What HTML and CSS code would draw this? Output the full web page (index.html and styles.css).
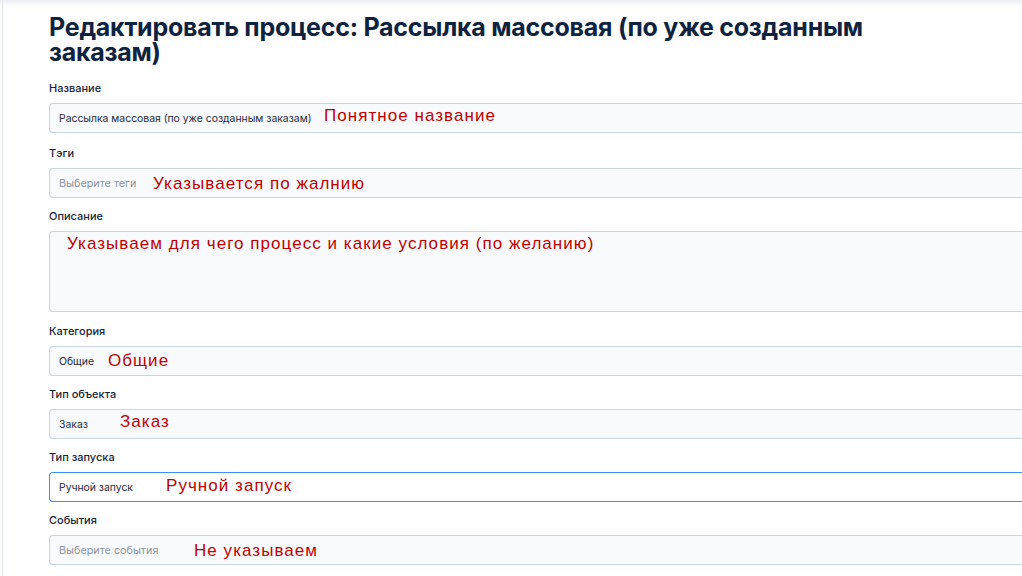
FILE: index.html
```html
<!DOCTYPE html>
<html>
<head>
    <title>Редактировать процесс</title>
    <link rel="stylesheet" href="styles.css">
</head>
<body>
    <div class="page">
        <h1>Редактировать процесс: Рассылка массовая (по уже созданным заказам)</h1>

        <div class="field first">
            <label>Название</label>
            <div class="input">
                <span class="value">Рассылка массовая (по уже созданным заказам)</span>
                <span class="note n-name">Понятное название</span>
            </div>
        </div>

        <div class="field">
            <label>Тэги</label>
            <div class="input">
                <span class="placeholder">Выберите теги</span>
                <span class="note n-tags">Указывается по жалнию</span>
            </div>
        </div>

        <div class="field wide">
            <label>Описание</label>
            <div class="input textarea">
                <span class="note n-desc">Указываем для чего процесс и какие условия (по желанию)</span>
            </div>
        </div>

        <div class="field">
            <label>Категория</label>
            <div class="input">
                <span class="value">Общие</span>
                <span class="note n-cat">Общие</span>
            </div>
        </div>

        <div class="field">
            <label>Тип объекта</label>
            <div class="input">
                <span class="value">Заказ</span>
                <span class="note n-obj">Заказ</span>
            </div>
        </div>

        <div class="field">
            <label>Тип запуска</label>
            <div class="input focused">
                <span class="value">Ручной запуск</span>
                <span class="note n-run">Ручной запуск</span>
            </div>
        </div>

        <div class="field">
            <label>События</label>
            <div class="input">
                <span class="placeholder">Выберите события</span>
                <span class="note n-events">Не указываем</span>
            </div>
        </div>
    </div>
</body>
</html>
```

FILE: styles.css
```css
html, body {
    margin: 0;
    height: 100%;
    overflow: hidden;
}
body {
    font-family: Inter, "Noto Sans", sans-serif;
    background: linear-gradient(#eceff3, #ffffff 7px);
}
.page {
    margin-left: 2px;
    border-left: 1px solid #e1e7ef;
    min-height: 100%;
    padding: 15px 0 0 46px;
}
h1 {
    margin: 0 0 15px 0;
    max-width: 870px;
    font-size: 25px;
    line-height: 25px;
    font-weight: 700;
    color: #0d2340;
    letter-spacing: -0.25px;
}
.field { margin-bottom: 10px; }
.field.first { margin-bottom: 12px; }
.field.wide { margin-bottom: 11px; }
.field label {
    display: block;
    font-size: 11px;
    line-height: 16px;
    font-weight: 500;
    color: #17243a;
    margin-bottom: 7px;
}
.input {
    position: relative;
    display: flex;
    align-items: center;
    box-sizing: border-box;
    height: 30px;
    padding: 0 9px;
    background: #f8fafc;
    border: 1px solid #c9d5e2;
    border-right: 0;
    border-radius: 4px 0 0 4px;
    font-size: 10.4px;
}
.input.textarea { height: 81px; }
.input.focused {
    background: #fff;
    border-color: #3d8ff2;
}
.value { color: #1e293b; }
.placeholder { color: #8b93a0; font-size: 10.8px; }
.note {
    position: absolute;
    font-family: "Liberation Sans", Arial, sans-serif;
    font-size: 17px;
    letter-spacing: 1.05px;
    color: #c00000;
    white-space: nowrap;
}
.n-name { left: 274px; top: 2px; }
.n-tags { left: 103px; top: 5px; }
.n-desc { left: 17px; top: 2px; }
.n-cat { left: 58px; top: 4px; }
.n-obj { left: 70px; top: 2px; }
.n-run { left: 116px; top: 3px; }
.n-events { left: 144px; top: 5px; }
```
